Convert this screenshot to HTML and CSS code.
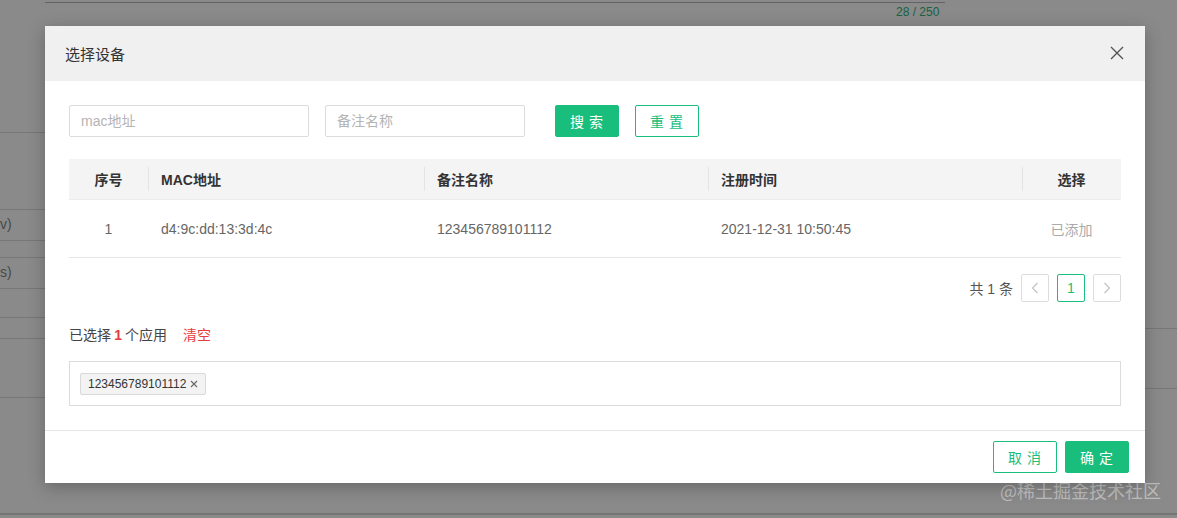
FILE: index.html
```html
<!DOCTYPE html>
<html lang="zh">
<head>
<meta charset="utf-8">
<title>选择设备</title>
<link rel="stylesheet" href="styles.css">
</head>
<body>
<div class="page">
  <div class="bg-top"><span class="bg-count">28 / 250</span></div>
  <div class="bg-left">
    <div class="bl l1"></div>
    <div class="bl l2"><span>v)</span></div>
    <div class="bl l3"></div>
    <div class="bl l4"><span>s)</span></div>
    <div class="bl l5"></div>
    <div class="bl l6"></div>
    <div class="bl l7"></div>
  </div>
  <div class="bg-right">
    <div class="br r1"></div>
    <div class="br r2"></div>
  </div>
  <div class="bg-bottom"></div>
</div>
<div class="overlay"></div>
<div class="watermark">@稀土掘金技术社区</div>

<div class="modal">
  <div class="modal-header">
    <span class="modal-title">选择设备</span>
    <svg class="close" width="14" height="14" viewBox="0 0 14 14"><path d="M1 1 L13 13 M13 1 L1 13" stroke="#555" stroke-width="1.4" fill="none"/></svg>
  </div>
  <div class="modal-body">
    <div class="search-bar">
      <input class="input input-mac" placeholder="mac地址">
      <input class="input input-name" placeholder="备注名称">
      <button class="btn btn-primary btn-search">搜 索</button>
      <button class="btn btn-outline">重 置</button>
    </div>
    <div class="table">
      <div class="tr thead">
        <div class="td c-idx">序号</div>
        <div class="td c-mac sep">MAC地址</div>
        <div class="td c-name sep">备注名称</div>
        <div class="td c-time sep">注册时间</div>
        <div class="td c-sel sep">选择</div>
      </div>
      <div class="tr tbody">
        <div class="td c-idx">1</div>
        <div class="td c-mac">d4:9c:dd:13:3d:4c</div>
        <div class="td c-name">123456789101112</div>
        <div class="td c-time">2021-12-31 10:50:45</div>
        <div class="td c-sel added">已添加</div>
      </div>
    </div>
    <div class="pager">
      <span class="total">共 1 条</span>
      <span class="pg pg-arrow"><svg width="8" height="12" viewBox="0 0 8 12"><path d="M6.5 1 L1.5 6 L6.5 11" stroke="#c0c0c0" stroke-width="1.1" fill="none"/></svg></span>
      <span class="pg pg-active">1</span>
      <span class="pg pg-arrow"><svg width="8" height="12" viewBox="0 0 8 12"><path d="M1.5 1 L6.5 6 L1.5 11" stroke="#c0c0c0" stroke-width="1.1" fill="none"/></svg></span>
    </div>
    <div class="selected-line">
      <span>已选择 <b class="num">1</b> 个应用</span>
      <span class="clear">清空</span>
    </div>
    <div class="tag-box">
      <span class="tag">123456789101112 <svg width="8" height="8" viewBox="0 0 8 8"><path d="M1 1 L7 7 M7 1 L1 7" stroke="#666" stroke-width="1.1" fill="none"/></svg></span>
    </div>
  </div>
  <div class="modal-footer">
    <button class="btn btn-outline">取 消</button>
    <button class="btn btn-primary">确 定</button>
  </div>
</div>
</body>
</html>
```

FILE: styles.css
```css
* { box-sizing: border-box; }
html, body { margin: 0; padding: 0; }
body {
  width: 1177px;
  height: 518px;
  overflow: hidden;
  position: relative;
  font-family: "Liberation Sans", "Noto Sans CJK SC", Arial, sans-serif;
  font-size: 14px;
  color: #333;
  background: #fff;
}
.page { position: absolute; inset: 0; }
.bg-top {
  position: absolute; left: 45px; top: 2px; width: 900px; height: 22px;
  border-top: 1px solid #b8b8b8;
}
.bg-count {
  position: absolute; left: 851px; top: 2px;
  font-size: 12px; color: #2fb57a;
}
.bg-left { position: absolute; left: 0; top: 0; width: 45px; height: 518px; }
.bl { position: absolute; left: 0; width: 45px; border-top: 1px solid #ddd; }
.bl span { position: absolute; left: 0; top: 6px; font-size: 14px; color: #888; }
.l1 { top: 132px; }
.l2 { top: 209px; }
.l3 { top: 240px; }
.l4 { top: 257px; }
.l5 { top: 288px; }
.l6 { top: 317px; }
.l7 { top: 338px; }
.bg-left::after { content: ""; position: absolute; left: 0; top: 397px; width: 45px; border-top: 1px solid #ddd; }
.bg-right { position: absolute; left: 1145px; top: 0; width: 32px; height: 518px; }
.br { position: absolute; left: 0; width: 32px; border-top: 1px solid #ddd; }
.r1 { top: 328px; }
.r2 { top: 388px; }
.bg-bottom { position: absolute; left: 0; top: 513px; width: 1177px; border-top: 2px solid #d8d8d8; }
.overlay { position: absolute; inset: 0; background: rgba(0,0,0,0.46); }
.watermark {
  position: absolute; left: 1000px; top: 477px;
  font-size: 18px; color: rgba(255,255,255,0.45);
  font-family: "Noto Sans CJK SC", sans-serif;
}

.modal {
  position: absolute; left: 45px; top: 26px;
  width: 1100px; height: 457px;
  background: #fff;
  box-shadow: 0 4px 16px rgba(0,0,0,0.25);
  display: flex; flex-direction: column;
}
.modal-header {
  height: 55px; background: #f0f0f0;
  display: flex; align-items: center; justify-content: space-between;
  padding: 0 21px 0 20px;
}
.modal-title { font-size: 15px; color: #333; font-family: "Noto Sans CJK SC", sans-serif; }
.close { display: block; margin-top: -1px; }

.modal-body { padding: 24px 24px 0 24px; flex: 1; }
.search-bar { display: flex; align-items: center; height: 32px; }
.input {
  height: 32px; border: 1px solid #dcdcdc; border-radius: 2px;
  padding: 0 11px; font-size: 14px; color: #333; outline: none;
  font-family: "Liberation Sans", "Noto Sans CJK SC", sans-serif;
}
.input::placeholder { color: #b4b4b4; }
.input-mac { width: 240px; margin-right: 16px; }
.input-name { width: 200px; margin-right: 30px; }
.btn {
  width: 64px; height: 32px; border-radius: 2px; font-size: 14px;
  font-family: "Noto Sans CJK SC", sans-serif; cursor: pointer;
  display: inline-flex; align-items: center; justify-content: center; padding: 0;
  letter-spacing: 1px;
}
.btn-primary { background: #19be7c; border: 1px solid #19be7c; color: #fff; }
.btn-outline { background: #fff; border: 1px solid #19be7c; color: #19be7c; }
.btn-search { margin-right: 16px; }

.table { margin-top: 22px; width: 1052px; }
.tr { display: flex; align-items: center; }
.thead { height: 40px; background: #f4f4f4; font-weight: bold; color: #333; }
.tbody { height: 59px; border-bottom: 1px solid #e6e6e6; color: #666; border-top: 1px solid #ececec; }
.td { height: 100%; display: flex; align-items: center; padding-left: 13px; position: relative; }
.thead .sep::before {
  content: ""; position: absolute; left: 0; top: 8px; bottom: 8px;
  border-left: 1px solid #e4e4e4;
}
.c-idx { width: 79px; justify-content: center; padding-left: 0; }
.c-mac { width: 276px; }
.c-name { width: 284px; }
.c-time { width: 314px; }
.c-sel { width: 99px; justify-content: center; padding-left: 0; }
.added { color: #aaa; }

.pager {
  display: flex; justify-content: flex-end; align-items: center;
  margin-top: 16px; height: 28px; width: 1052px;
  color: #555;
}
.total { margin-right: 8px; font-family: "Liberation Sans", "Noto Sans CJK SC", sans-serif; font-size: 14px; color: #555; }
.pg {
  width: 28px; height: 28px; border: 1px solid #ddd; border-radius: 2px;
  display: inline-flex; align-items: center; justify-content: center;
  margin-left: 8px; font-size: 14px;
}
.total + .pg { margin-left: 0; }
.pg-active { border-color: #19be7c; color: #19be7c; }

.selected-line { margin-top: 22px; display: flex; gap: 16px; color: #444; height: 20px; align-items: center; font-family: "Noto Sans CJK SC", sans-serif; }
.num { color: #e83b3b; font-family: "Liberation Sans", sans-serif; }
.clear { color: #e83b3b; }
.tag-box {
  margin-top: 17px; width: 1052px; height: 45px;
  border: 1px solid #dcdcdc; padding: 11px 10px;
}
.tag {
  display: inline-flex; align-items: center; gap: 4px;
  height: 22px; padding: 0 7px; font-size: 12px; color: #333;
  background: #f3f3f3; border: 1px solid #d9d9d9; border-radius: 2px;
}

.modal-footer {
  height: 53px; border-top: 1px solid #e6e6e6;
  display: flex; justify-content: flex-end; align-items: center;
  gap: 8px; padding: 0 16px 0 0;
}
```
